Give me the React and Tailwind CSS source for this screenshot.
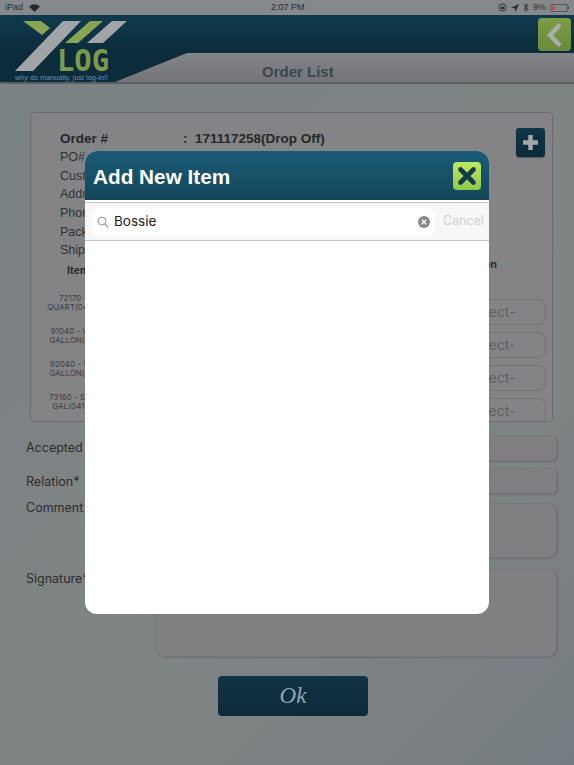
const F = { fontFamily: '"Liberation Sans", Arial, sans-serif' };
const IN = { fontFamily: 'Inter, sans-serif' };
const details = ['PO#', 'Customer', 'Address', 'Phone', 'Package', 'Shipper'];
const items = [
  ['72170 - WD', 'QUART(04111972)'],
  ['91040 - WASHE', 'GALLON(041119)'],
  ['92040 - WASHE', 'GALLON(041119)'],
  ['73160 - SRT CLE', 'GAL(04119722)'],
];

function Logo() {
  return (
    <svg width="130" height="68" viewBox="0 0 130 68" className="shrink-0">
      <polygon points="23,6 41,6 50,13 42,20" fill="#8aa552" />
      <polygon points="63,6 81,6 33,56 15,56" fill="#a2a5a8" />
      <polygon points="90,6 103,6 78,28 65,28" fill="#8aa552" />
      <polygon points="112,6 127,6 103,28 87,28" fill="#a2a5a8" />
      <text x="57" y="56" fontFamily="DejaVu Sans Mono, monospace" fontWeight="700" fontSize="31" fill="#7d9a4c" textLength="52" lengthAdjust="spacingAndGlyphs">LOG</text>
      <text x="15" y="65" fontFamily="Liberation Sans, sans-serif" fontSize="6.5" fill="#7a9099" textLength="93" lengthAdjust="spacingAndGlyphs">why do manually, just log-in!!</text>
    </svg>
  );
}

function Field({ label, labelClass, className }) {
  return (
    <div className="flex items-start">
      <div className={`w-[155px] shrink-0 pl-[26px] text-[12.5px] leading-[16px] text-[#2b2d2f] ${labelClass}`} style={IN}>{label}</div>
      <div className={`w-[402px] bg-[#807f82] border border-[#77777a] shadow-[1px_1px_1px_#6c6f72] ${className}`} />
    </div>
  );
}

export default function App() {
  return (
    <div className="relative w-[574px] h-[765px] overflow-hidden bg-[linear-gradient(135deg,#7b8285_0%,#7d8384_30%,#7f8484_55%,#7d8283_75%,#757c81_100%)]" style={F}>
      {/* status bar */}
      <div className="h-[15px] flex items-center justify-between px-[5px] bg-[#85898c] text-[9px] text-[#2c2e30] relative">
        <div className="flex items-center gap-[6px]">
          <span>iPad</span>
          <svg width="11" height="8" viewBox="0 0 11 8"><path d="M5.5 8 L0 2.4 Q5.5 -1.8 11 2.4 Z" fill="#26282a" /></svg>
        </div>
        <span className="absolute left-[271px] top-[1px]">2:07 PM</span>
        <div className="flex items-center gap-[4px]">
          <svg width="9" height="9" viewBox="0 0 9 9"><circle cx="4.5" cy="4.5" r="3.6" fill="none" stroke="#2c2e30" strokeWidth="0.9" /><rect x="2.8" y="3.6" width="3.4" height="2.6" fill="#2c2e30" /></svg>
          <svg width="8" height="8" viewBox="0 0 8 8"><path d="M8 0 L0 3.6 L3.8 4.2 L4.4 8 Z" fill="#2c2e30" /></svg>
          <svg width="6" height="9" viewBox="0 0 6 9"><path d="M0.6 2.3 L5 6.4 L3 8.4 V0.6 L5 2.6 L0.6 6.7" fill="none" stroke="#2c2e30" strokeWidth="0.9" /></svg>
          <span>9%</span>
          <div className="flex items-center">
            <div className="w-[18px] h-[8px] border border-[#55585a] rounded-[2px] p-px"><div className="w-[3px] h-full bg-[#b5534f]" /></div>
            <div className="w-px h-[3px] bg-[#55585a]" />
          </div>
        </div>
      </div>

      {/* header */}
      <div className="relative h-[69px] bg-[linear-gradient(180deg,#0f3a4d_0%,#0c2c3b_55%,#0c2c3b_100%)] border-b-2 border-[#5c6063]">
        <div className="absolute left-[115px] right-0 top-[38px] bottom-0 bg-[linear-gradient(180deg,#838487,#747579)] [clip-path:polygon(72px_0,100%_0,100%_100%,0_100%)] flex items-center">
          <span className="ml-[147px] mt-[10px] text-[15px] font-bold text-[#3c474d]">Order List</span>
        </div>
        <div className="absolute left-0 top-0"><Logo /></div>
        <div className="absolute right-[3px] top-[3px] w-[33px] h-[33px] rounded-[4px] bg-[linear-gradient(180deg,#7f9c46,#688a3a)] flex items-center justify-center">
          <svg width="20" height="26" viewBox="0 0 20 26"><path d="M15 2.5 L5 13 L15 23.5" fill="none" stroke="#a9adac" strokeWidth="4.5" /></svg>
        </div>
      </div>

      {/* order panel */}
      <div className="relative ml-[30px] mt-[28px] w-[523px] h-[310px] rounded-[5px] bg-[#848487] border border-[#6a6c6f] overflow-hidden text-[#2f3133]">
        <div className="pl-[29px] pt-[16px]">
          <div className="flex h-[19px] items-center pt-[1px] text-[13.5px] font-bold text-[#26282a]">
            <span className="w-[123px]">Order #</span>
            <span>:&nbsp; 171117258(Drop Off)</span>
          </div>
          {details.map((d) => (
            <div key={d} className="h-[18.7px] flex items-center text-[12.5px] text-[#303234]">{d}</div>
          ))}
        </div>
        <div className="flex justify-between pl-[36px] pr-[55px] pt-[2px] text-[11px] font-bold text-[#26282a]">
          <span>Item</span>
          <span className="-mt-[6px]">Action</span>
        </div>
        <div className="mt-[20px] flex flex-col gap-[7px]">
          {items.map((it, i) => (
            <div key={i} className="flex h-[26px] justify-between items-start pr-[6px]">
              <div className="w-[100px] -mt-[5px] text-center text-[8px] leading-[9px] text-[#3c3e41] whitespace-nowrap" style={IN}>
                <div>{it[0]}</div><div>{it[1]}</div>
              </div>
              <div className="w-[115px] h-[26px] shrink-0 rounded-[8px] border border-[#737376] flex items-center justify-center text-[14px] text-[#5f6063]" style={IN}>-Select-</div>
            </div>
          ))}
        </div>
        <div className="absolute right-[7px] top-[15px] w-[29px] h-[29px] rounded-[3px] bg-[linear-gradient(180deg,#0f3547,#0b2a39)] shadow-[0_1px_1px_#55585b] flex items-center justify-center">
          <svg width="17" height="17" viewBox="0 0 17 17"><path d="M8.5 1 V16 M1 8.5 H16" stroke="#a3a7a9" strokeWidth="4.5" /></svg>
        </div>
      </div>

      {/* form */}
      <div className="mt-[13px] flex flex-col">
        <Field label="Accepted" labelClass="pt-[5px]" className="h-[26px] rounded-[5px]" />
        <div className="h-[7px]" />
        <Field label="Relation*" labelClass="pt-[6px]" className="h-[26px] rounded-[5px]" />
        <div className="h-[9px]" />
        <Field label="Comment" labelClass="-mt-[3px]" className="h-[55px] rounded-[10px]" />
        <div className="h-[11px]" />
        <Field label="Signature*" labelClass="pt-[2px]" className="h-[88px] rounded-[10px]" />
      </div>

      <div className="mt-[19px] ml-[218px] w-[150px] h-[40px] rounded-[4px] bg-[linear-gradient(180deg,#103345,#0e2a39)] flex items-center justify-center">
        <span className="text-[23px] italic text-[#8fa5ad]" style={{ fontFamily: '"Liberation Serif", serif' }}>Ok</span>
      </div>

      {/* modal */}
      <div className="absolute left-[85px] top-[151px] w-[404px] h-[463px] rounded-[12px] bg-white overflow-hidden flex flex-col">
        <div className="h-[49px] shrink-0 bg-[linear-gradient(180deg,#1a5c77,#124657)] flex items-center justify-between pl-[8px] pr-[8px]">
          <span className="mt-[3px] text-[20.75px] font-bold text-white">Add New Item</span>
          <div className="w-[28px] h-[28px] mt-[1px] rounded-[4px] bg-[linear-gradient(180deg,#bfe763,#90c84c)] flex items-center justify-center">
            <svg width="20" height="20" viewBox="0 0 20 20"><path d="M3.5 3.5 L16.5 16.5 M16.5 3.5 L3.5 16.5" stroke="#143a48" strokeWidth="4.6" strokeLinecap="round" /></svg>
          </div>
        </div>
        <div className="h-[3px] shrink-0 bg-white border-b border-[#c6c6c8]" />
        <div className="h-[38px] shrink-0 bg-[#f7f7f7] border-b border-[#c2c2c4] flex items-center pl-[7px]">
          <div className="w-[343px] h-[28px] rounded-[8px] bg-white flex items-center pl-[5px] pr-[5px]" style={IN}>
            <svg width="12" height="12" viewBox="0 0 12 12"><circle cx="5" cy="5" r="3.9" fill="none" stroke="#929296" strokeWidth="1" /><path d="M8 8 L11.3 11.3" stroke="#929296" strokeWidth="1.1" /></svg>
            <span className="ml-[5px] text-[13.5px] text-[#222] flex-1">Bossie</span>
            <svg width="12" height="12" viewBox="0 0 12 12"><circle cx="6" cy="6" r="6" fill="#88888c" /><path d="M3.8 3.8 L8.2 8.2 M8.2 3.8 L3.8 8.2" stroke="#fff" strokeWidth="1.3" /></svg>
          </div>
          <span className="ml-[8px] text-[12.5px] text-[#cfcfd1]" style={IN}>Cancel</span>
        </div>
      </div>
    </div>
  );
}
